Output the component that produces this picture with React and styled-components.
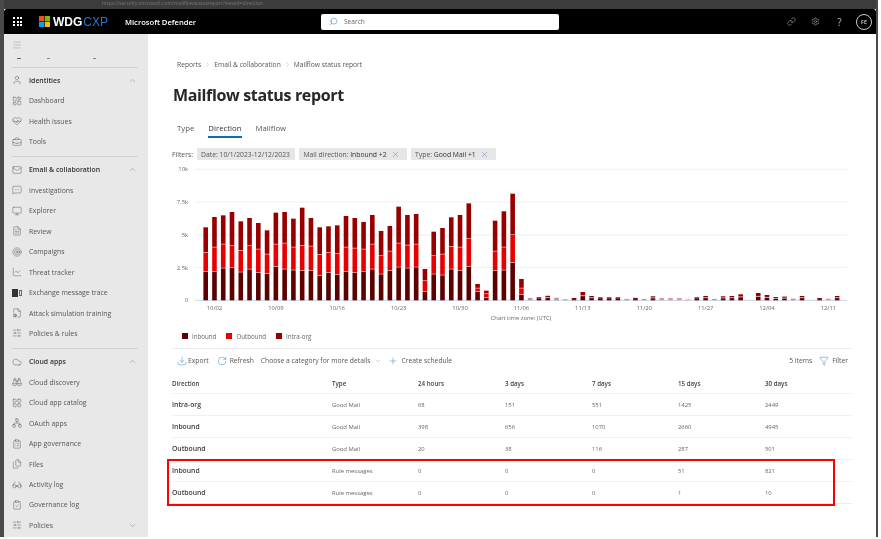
import React from "react";
import styled, { createGlobalStyle } from "styled-components";
import {
  User, LayoutDashboard, HeartPulse, BriefcaseBusiness, Mail, ChevronUp, ChevronDown, ChevronRight,
  MessageSquareMore, Monitor, FileText, Target, ChartLine, FileCog, SlidersHorizontal, Cloud,
  Binoculars, LayoutGrid, Network, ClipboardList, Files, Glasses, ClipboardCheck, Menu, Search,
  X, Download, RotateCw, Plus, Settings, Link as LinkIcon, Funnel,
} from "lucide-react";

const Global = createGlobalStyle`
  html, body { margin: 0; padding: 0; background: #fff; }
  body { font-family: "Open Sans", "Noto Sans", "Liberation Sans", sans-serif; color: #333; overflow: hidden; }
  * { box-sizing: border-box; }
`;

const Page = styled.div`
  width: 881px; height: 539px; background: #fff; overflow: hidden;
`;
const Window = styled.div`
  width: 878px; height: 537px; display: flex; flex-direction: column; overflow: hidden;
  border-left: 4px solid #4a4a4a; border-right: 2px solid #4a4a4a; background: #fff;
  filter: blur(0.4px);
`;
const BrowserStrip = styled.div`
  height: 9px; flex: none; background: #3c3c3c; color: #777; font-size: 5px; line-height: 6px;
  padding-left: 98px; white-space: nowrap;
`;
const Header = styled.header`
  height: 25px; flex: none; background: #000; color: #fff; display: flex; align-items: center;
  border-radius: 3px 3px 0 0; padding: 0 4px 0 8px;
`;
const Waffle = styled.div`
  width: 9px; display: grid; grid-template-columns: repeat(3, 2px); gap: 1.5px; margin-right: 17px; margin-left: 1px;
  i { width: 2px; height: 2px; background: #fff; display: block; }
`;
const LogoText = styled.span`
  font-family: "Liberation Sans", sans-serif; font-size: 12px; font-weight: 700; margin-left: 3px; width: 54px;
  color: #fff; b { color: #1f78d1; font-weight: 400; margin-left: 1px; }
`;
const Product = styled.span`
  font-size: 7.6px; font-weight: 600; margin-left: 18px; width: 196px;
`;
const SearchBox = styled.div`
  width: 238px; height: 16px; background: #fff; border-radius: 2px; display: flex; align-items: center;
  gap: 6px; padding-left: 8px; color: #666; font-size: 6.6px;
  svg { color: #0f6cbd; transform: scaleX(-1); }
`;
const HeaderActions = styled.div`
  margin-left: auto; display: flex; align-items: center; gap: 15px; color: #bbb; font-size: 10px;
  span { width: 9px; text-align: center; }
`;
const Avatar = styled.div`
  width: 16px; height: 16px; border: 1px solid #ccc; border-radius: 50%; display: flex; align-items: center; margin-left: -3px;
  justify-content: center; font-size: 5.4px; font-weight: 600; color: #ddd;
`;
const Body = styled.div`
  flex: 1; display: flex; min-height: 0;
`;
const Sidebar = styled.nav`
  width: 144px; flex: none; background: #e8e8e8; padding: 1px 10px 0 8px; overflow: hidden;
`;
const MenuRow = styled.div`
  height: 20px; display: flex; align-items: center; color: #888;
`;
const ClippedRow = styled.div`
  height: 11px; display: flex; align-items: flex-start; padding-left: 5px;
  i { width: 4px; height: 1px; background: #666; display: block; margin-top: 3px; }
  i:nth-child(2) { width: 3px; margin-left: 26px; background: #888; }
  i:nth-child(3) { width: 3px; margin-left: 43px; background: #888; }
`;
const Rule = styled.div`
  height: 1px; background: #d2d2d2; margin: ${p => p.$m || "1px 0 3px"};
`;
const NavRow = styled.div`
  height: 20.45px; display: flex; align-items: center; font-size: 6.9px; white-space: nowrap;
  color: ${p => (p.$head ? "#333" : "#555")}; font-weight: ${p => (p.$head ? 600 : 400)};
  svg.lead { width: 10px; height: 10px; flex: none; margin: 0 7px 0 0; stroke-width: 1; color: #444; }
  svg.chev { width: 9px; height: 9px; margin-left: auto; margin-right: 1px; stroke-width: 1; color: #666; }
`;
const ExchangeMark = styled.span`
  width: 10px; height: 10px; flex: none; margin-right: 7px; display: flex; align-items: center; gap: 1px;
  i { width: 6px; height: 8px; background: #333; display: block; }
  b { width: 3px; height: 6px; border: 1px solid #666; display: block; }
`;
const Main = styled.main`
  flex: 1; min-width: 0; padding: 24px 24px 0; color: #444;
`;
const Breadcrumbs = styled.div`
  height: 12px; display: flex; align-items: center; padding-left: 5px; font-size: 6.7px; color: #555; gap: 3px;
  svg { width: 7px; height: 7px; color: #777; stroke-width: 1; }
`;
const Title = styled.h1`
  margin: 13px 0 0; padding-left: 1px; height: 24px; line-height: 24px; font-size: 16px; letter-spacing: -0.35px; font-weight: 700; color: #272727;
`;
const Tabs = styled.div`
  margin-top: 12px; display: flex; gap: 14px; padding-left: 5px; height: 19px;
`;
const Tab = styled.div`
  height: 19px; line-height: 18px; font-size: 7.8px; color: ${p => (p.$on ? "#333" : "#555")}; font-weight: ${p => (p.$on ? 500 : 400)};
  border-bottom: 2px solid ${p => (p.$on ? "#0f6cbd" : "transparent")};
`;
const Filters = styled.div`
  margin-top: 10px; display: flex; align-items: center; gap: 4.5px; font-size: 6.8px; height: 12px; color: #555;
`;
const FilterLabel = styled.span` width: 20.5px; `;
const Chip = styled.div`
  height: 12px; background: #e6e6e6; display: flex; align-items: center; padding: 0 ${p => (p.$plain ? 5 : 7)}px 0 4px; gap: 4px; white-space: nowrap; color: #555;
  b { font-weight: 500; color: #333; }
  svg { width: 9px; height: 9px; color: #3a6ea5; stroke-width: 1; }
`;
const ChartSvg = styled.svg`
  display: block; width: 680px; height: 163px; margin-top: 2px;
  text { font-family: "Open Sans", "Noto Sans", sans-serif; font-size: 5.8px; fill: #666; }
`;
const Legend = styled.div`
  height: 12px; margin: 5px 0 6px; padding-left: 10px; display: flex; align-items: center; gap: 10px; font-size: 6.2px; color: #666;
`;
const LegendItem = styled.span`
  display: flex; align-items: center; gap: 4px;
  i { width: 6px; height: 6px; background: ${p => p.$c}; display: block; }
`;
const Toolbar = styled.div`
  height: 24px; border-top: 1px solid #ececec; display: flex; align-items: center; font-size: 6.75px; color: #555; padding: 0 4px 0 5px;
`;
const Tool = styled.span`
  display: flex; align-items: center; gap: ${p => p.$gap ?? 3}px; white-space: nowrap;
  margin-right: ${p => p.$mr || 0}px; margin-left: ${p => (p.$push ? "auto" : "0")};
  svg { width: 10px; height: 10px; color: #0f6cbd; stroke-width: 1; }
  svg.plain { color: #777; width: 8px; height: 8px; }
`;
const TableWrap = styled.div`
  position: relative;
`;
const Row = styled.div`
  height: 22px; display: grid; grid-template-columns: 160px 86px 87px 87px 86px 87px 87px; align-items: center;
  border-bottom: 1px solid ${p => (p.$last ? "#ececec" : "#f0f0f0")}; font-size: 5.9px; color: #666;
`;
const HeadCell = styled.div`
  font-size: 6.2px; font-weight: 600; color: #444; padding-top: 1px;
`;
const NameCell = styled.div`
  font-size: 6.8px; font-weight: 600; color: #3c3c3c;
`;
const Highlight = styled.div`
  position: absolute; left: -5px; top: 87px; width: 668px; height: 46.5px; border: 2px solid #f00; pointer-events: none;
`;

const TOPS = [
  [335,278,202],[335,262,171],[325,253,166],[323,258,156],[337,272,184],[328,258,174],[338,268,189],[341,283,211],
  [320,253,158],[328,250,156],[331,262,176],[332,257,143],[332,259,174],[347,284,202],[338,278,199],[344,281,196],
  [335,262,168],[338,265,174],[335,268,186],[328,253,165],[343,288,213],[332,274,198],[322,250,140],[325,256,165],
  [322,253,162],[395,363,327],[343,288,215],[346,283,204],[328,260,172],[332,262,165],[320,237,130],[395,385,372],
  [413,402,392],[332,274,182],[331,262,154],[308,225,101],[405,385,357],
];
const SMALL = [
  [37,2.4,1],[38,3,0],[39,4.5,0],[40,2.6,1],[41,1,1],[42,2.3,0],[43,8.3,0],[44,4.3,0],[45,3,0],[46,3,0],[47,3,0],[48,1.4,1],
  [49,2.4,0],[50,1.4,1],[51,4,0],[52,2.4,2],[53,2.4,2],[54,2.4,2],[55,0.8,2],[56,3,0],[57,4.3,0],[58,1.4,1],[59,4,0],
  [60,4.3,0],[61,6,0],[63,7.3,0],[64,5.3,0],[65,3.3,0],[66,3.7,0],[67,1.7,1],[68,4.3,0],[70,2.3,0],[71,1.7,2],[72,4.3,0],
];
const GRID = [["10k", 169.3], ["7.5k", 202], ["5k", 235], ["2.5k", 267.5], ["0", 300.3]];
const TICKS = [["10/02", 1], ["10/09", 8], ["10/16", 15], ["10/23", 22], ["10/30", 29], ["11/06", 36], ["11/13", 43], ["11/20", 50], ["11/27", 57], ["12/04", 64], ["12/11", 71]];
const BASE = 300.3;
const cx = n => 205.7 + 8.77 * n;
const W = 4.6;

function Chart() {
  return (
    <ChartSvg viewBox="172 162 680 163" aria-label="Mail flow by direction">
      {GRID.map(([label, y]) => (
        <g key={label}>
          <text x="188" y={y + 2} textAnchor="end">{label}</text>
          <line x1="195" x2="847" y1={y} y2={y} stroke={label === "0" ? "#c9d3ea" : "#efefef"} strokeWidth="1" />
        </g>
      ))}
      {TOPS.map(([a, b, c], n) => {
        const ya = 160 + a / 3, yb = 160 + b / 3, yc = 160 + c / 3, x = cx(n) - W / 2;
        return (
          <g key={n}>
            <rect x={x} y={ya} width={W} height={BASE - ya} fill="#5c0000" />
            <rect x={x} y={yb} width={W} height={ya - yb - 0.5} fill="#e80000" />
            <rect x={x} y={yc} width={W} height={yb - yc - 0.5} fill="#980000" />
          </g>
        );
      })}
      {SMALL.map(([n, h, tone]) => {
        const x = cx(n) - W / 2;
        if (tone === 1) return <rect key={n} x={x} y={BASE - h} width={W} height={h} fill="#b99a9a" />;
        if (tone === 2) return <rect key={n} x={x} y={BASE - h} width={W} height={h} fill="#dc9c9c" />;
        const low = h * 0.5;
        return (
          <g key={n}>
            <rect x={x} y={BASE - low} width={W} height={low} fill="#5c0000" />
            <rect x={x} y={BASE - h} width={W} height={h - low - (h > 3 ? 0.7 : 0)} fill={h > 5 ? "#980000" : "#7a0a0a"} />
          </g>
        );
      })}
      {TICKS.map(([label, n]) => <text key={label} x={cx(n)} y="310" textAnchor="middle">{label}</text>)}
      <text x="521" y="320" textAnchor="middle">Chart time zone: (UTC)</text>
    </ChartSvg>
  );
}

const SECTIONS = [
  { head: ["Identities", User], items: [["Dashboard", LayoutDashboard], ["Health issues", HeartPulse], ["Tools", BriefcaseBusiness]] },
  { head: ["Email & collaboration", Mail], items: [["Investigations", MessageSquareMore], ["Explorer", Monitor], ["Review", FileText], ["Campaigns", Target], ["Threat tracker", ChartLine], ["Exchange message trace", null], ["Attack simulation training", FileCog], ["Policies & rules", SlidersHorizontal]] },
  { head: ["Cloud apps", Cloud], items: [["Cloud discovery", Binoculars], ["Cloud app catalog", LayoutGrid], ["OAuth apps", Network], ["App governance", ClipboardList], ["Files", Files], ["Activity log", Glasses], ["Governance log", ClipboardCheck], ["Policies", SlidersHorizontal, true]] },
];
const ROWS = [
  ["Intra-org", "Good Mail", 68, 151, 551, 1425, 2449],
  ["Inbound", "Good Mail", 398, 656, 1070, 2660, 4945],
  ["Outbound", "Good Mail", 20, 38, 116, 287, 501],
  ["Inbound", "Rule messages", 0, 0, 0, 51, 821],
  ["Outbound", "Rule messages", 0, 0, 0, 1, 10],
];

export default function App() {
  return (
    <Page>
      <Global />
      <Window>
        <BrowserStrip>https://security.microsoft.com/mailflowstatusreport?viewid=direction</BrowserStrip>
        <Header>
          <Waffle>{Array.from({ length: 9 }, (_, i) => <i key={i} />)}</Waffle>
          <svg width="11" height="11" viewBox="0 0 11 11" aria-hidden="true">
            <rect width="5.2" height="5.2" fill="#f25022" /><rect x="5.8" width="5.2" height="5.2" fill="#7fba00" />
            <rect y="5.8" width="5.2" height="5.2" fill="#00a4ef" /><rect x="5.8" y="5.8" width="5.2" height="5.2" fill="#ffb900" />
          </svg>
          <LogoText>WDG<b>CXP</b></LogoText>
          <Product>Microsoft Defender</Product>
          <SearchBox><Search size={9} strokeWidth={1.2} />Search</SearchBox>
          <HeaderActions>
            <LinkIcon size={9} strokeWidth={1.4} />
            <Settings size={9} strokeWidth={1.4} />
            <span>?</span>
            <Avatar>FE</Avatar>
          </HeaderActions>
        </Header>
        <Body>
          <Sidebar>
            <MenuRow><Menu size={10} strokeWidth={1} /></MenuRow>
            <ClippedRow><i /><i /><i /></ClippedRow>
            {SECTIONS.map(({ head: [label, Icon], items }, s) => (
              <div key={label}>
                <Rule $m={s === 0 ? "1px 0 2px" : "4px 0 3px"} />
                <NavRow $head><Icon className="lead" />{label}<ChevronUp className="chev" /></NavRow>
                {items.map(([text, ItemIcon, collapsed]) => (
                  <NavRow key={text}>
                    {ItemIcon ? <ItemIcon className="lead" /> : <ExchangeMark><i /><b /></ExchangeMark>}
                    {text}
                    {collapsed && <ChevronDown className="chev" />}
                  </NavRow>
                ))}
              </div>
            ))}
          </Sidebar>
          <Main>
            <Breadcrumbs>Reports<ChevronRight />Email &amp; collaboration<ChevronRight />Mailflow status report</Breadcrumbs>
            <Title>Mailflow status report</Title>
            <Tabs><Tab>Type</Tab><Tab $on>Direction</Tab><Tab>Mailflow</Tab></Tabs>
            <Filters>
              <FilterLabel>Filters:</FilterLabel>
              <Chip $plain><span>Date: 10/1/2023-12/12/2023</span></Chip>
              <Chip><span>Mail direction: <b>Inbound +2</b></span><X /></Chip>
              <Chip><span>Type: <b>Good Mail +1</b></span><X /></Chip>
            </Filters>
            <Chart />
            <Legend>
              <LegendItem $c="#5c0000"><i />Inbound</LegendItem>
              <LegendItem $c="#e80000"><i />Outbound</LegendItem>
              <LegendItem $c="#980000"><i />Intra-org</LegendItem>
            </Legend>
            <Toolbar>
              <Tool $gap={1} $mr={8}><Download />Export</Tool>
              <Tool $mr={7}><RotateCw />Refresh</Tool>
              <Tool $mr={6}>Choose a category for more details<ChevronDown className="plain" /></Tool>
              <Tool $gap={4}><Plus />Create schedule</Tool>
              <Tool $push $mr={7}>5 items</Tool>
              <Tool><Funnel />Filter</Tool>
            </Toolbar>
            <TableWrap>
              <Row>
                {["Direction", "Type", "24 hours", "3 days", "7 days", "15 days", "30 days"].map(h => <HeadCell key={h}>{h}</HeadCell>)}
              </Row>
              {ROWS.map(([name, type, ...nums], i) => (
                <Row key={i} $last={i === ROWS.length - 1}>
                  <NameCell>{name}</NameCell>
                  <div>{type}</div>
                  {nums.map((v, j) => <div key={j}>{v}</div>)}
                </Row>
              ))}
              <Highlight />
            </TableWrap>
          </Main>
        </Body>
      </Window>
    </Page>
  );
}
